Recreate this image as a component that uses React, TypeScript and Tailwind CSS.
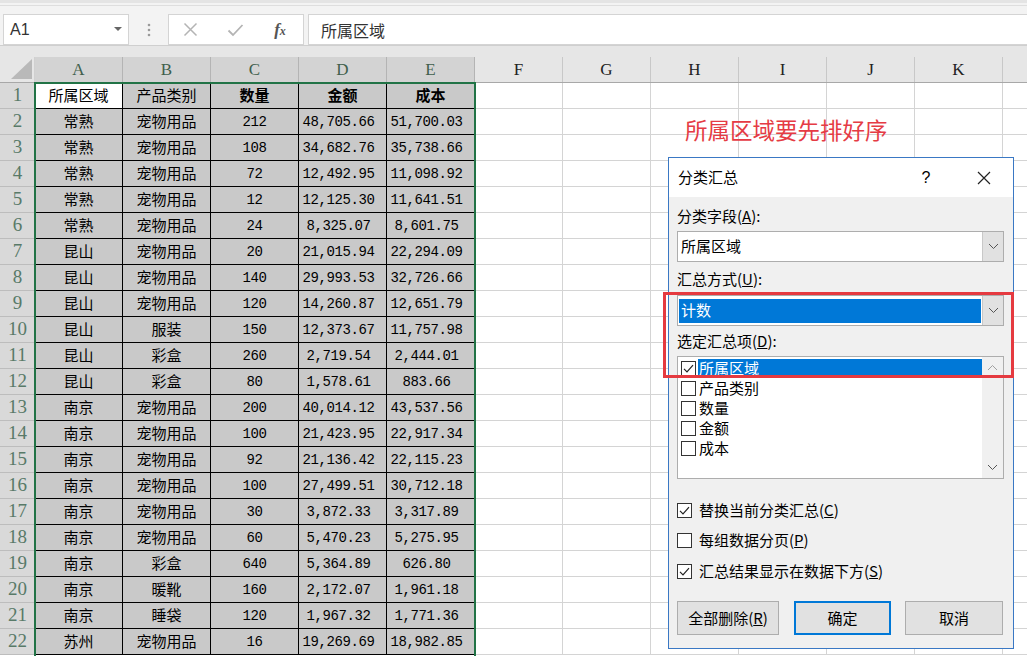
const COLS = ['A', 'B', 'C', 'D', 'E', 'F', 'G', 'H', 'I', 'J', 'K'];

const data: string[][] = [
  ['所属区域', '产品类别', '数量', '金额', '成本'],
  ['常熟', '宠物用品', '212', '48,705.66', '51,700.03'],
  ['常熟', '宠物用品', '108', '34,682.76', '35,738.66'],
  ['常熟', '宠物用品', '72', '12,492.95', '11,098.92'],
  ['常熟', '宠物用品', '12', '12,125.30', '11,641.51'],
  ['常熟', '宠物用品', '24', '8,325.07', '8,601.75'],
  ['昆山', '宠物用品', '20', '21,015.94', '22,294.09'],
  ['昆山', '宠物用品', '140', '29,993.53', '32,726.66'],
  ['昆山', '宠物用品', '120', '14,260.87', '12,651.79'],
  ['昆山', '服装', '150', '12,373.67', '11,757.98'],
  ['昆山', '彩盒', '260', '2,719.54', '2,444.01'],
  ['昆山', '彩盒', '80', '1,578.61', '883.66'],
  ['南京', '宠物用品', '200', '40,014.12', '43,537.56'],
  ['南京', '宠物用品', '100', '21,423.95', '22,917.34'],
  ['南京', '宠物用品', '92', '21,136.42', '22,115.23'],
  ['南京', '宠物用品', '100', '27,499.51', '30,712.18'],
  ['南京', '宠物用品', '30', '3,872.33', '3,317.89'],
  ['南京', '宠物用品', '60', '5,470.23', '5,275.95'],
  ['南京', '彩盒', '640', '5,364.89', '626.80'],
  ['南京', '暖靴', '160', '2,172.07', '1,961.18'],
  ['南京', '睡袋', '120', '1,967.32', '1,771.36'],
  ['苏州', '宠物用品', '16', '19,269.69', '18,982.85'],
];

const cjk = "font-['Noto_Sans_CJK_SC',sans-serif]";

function Check({ on }: { on: boolean }) {
  return (
    <div className="w-[15px] h-[15px] border border-[#333] bg-white shrink-0 flex items-center justify-center">
      {on && (
        <svg width="13" height="13" viewBox="0 0 13 13">
          <path d="M2 6.8 L5 9.8 L11 3.2" fill="none" stroke="#222" strokeWidth="1.2" />
        </svg>
      )}
    </div>
  );
}

function Chevron({ up }: { up?: boolean }) {
  return (
    <svg width="11" height="7" viewBox="0 0 11 7">
      <path d={up ? 'M1 6 L5.5 1.5 L10 6' : 'M1 1 L5.5 5.5 L10 1'} fill="none" stroke={up ? '#a0a0a0' : '#555'} strokeWidth="1" />
    </svg>
  );
}

function Combo({ value, selected }: { value: string; selected?: boolean }) {
  return (
    <div className="w-[327px] h-[31px] bg-white border border-[#adadad] flex">
      <div className="flex-1 flex items-center px-[1px]">
        {selected ? (
          <div className="w-full h-[24px] bg-[#0078d7] text-white flex items-center pl-[2px]">{value}</div>
        ) : (
          <div className="pl-[2px] text-black">{value}</div>
        )}
      </div>
      <div className="w-[21px] bg-[#e1e1e1] border-l border-[#c8c8c8] flex items-center justify-center">
        <Chevron />
      </div>
    </div>
  );
}

function Dialog() {
  const items = ['所属区域', '产品类别', '数量', '金额', '成本'];
  return (
    <div className={`absolute left-[668px] top-[157px] w-[346px] h-[492px] border border-[#3a78c4] bg-[#f0f0f0] ${cjk} text-[15px] text-black`}>
      <div className="h-[39px] bg-white flex items-center pl-[9px] pr-[6px]">
        <span>分类汇总</span>
        <div className="flex-1" />
        <div className="w-[46px] flex justify-center text-[16px] font-['Liberation_Sans']">?</div>
        <div className="w-[12px]" />
        <div className="w-[46px] flex justify-center">
          <svg width="14" height="14" viewBox="0 0 14 14">
            <path d="M1 1 L13 13 M13 1 L1 13" stroke="#222" strokeWidth="1.2" />
          </svg>
        </div>
      </div>
      <div className="px-[8px]">
        <div className="mt-[9px] h-[20px] leading-[20px]">分类字段(<span className="underline">A</span>):</div>
        <div className="mt-[5px]">
          <Combo value="所属区域" />
        </div>
        <div className="mt-[7px] h-[20px] leading-[20px]">汇总方式(<span className="underline">U</span>):</div>
        <div className="mt-[6px]">
          <Combo value="计数" selected />
        </div>
        <div className="mt-[5px] h-[20px] leading-[20px]">选定汇总项(<span className="underline">D</span>):</div>
        <div className="mt-[5px] w-[327px] h-[123px] bg-white border border-[#adadad] flex">
          <div className="flex-1 pt-[1px]">
            {items.map((it, i) => (
              <div key={it} className="h-[20px] flex items-center pl-[3px]">
                <Check on={i === 0} />
                <div className={`ml-[2px] flex-1 h-[19px] flex items-center pl-[1px] ${i === 0 ? 'bg-[#0078d7] text-white' : ''}`}>{it}</div>
              </div>
            ))}
          </div>
          <div className="w-[21px] bg-[#f0f0f0] flex flex-col items-center justify-between py-[7px]">
            <Chevron up />
            <Chevron up={false} />
          </div>
        </div>
        <div className="mt-[21px] h-[20px] flex items-center gap-[7px]">
          <Check on />
          <span>替换当前分类汇总(<span className="underline">C</span>)</span>
        </div>
        <div className="mt-[10px] h-[20px] flex items-center gap-[7px]">
          <Check on={false} />
          <span>每组数据分页(<span className="underline">P</span>)</span>
        </div>
        <div className="mt-[11px] h-[20px] flex items-center gap-[7px]">
          <Check on />
          <span>汇总结果显示在数据下方(<span className="underline">S</span>)</span>
        </div>
        <div className="mt-[20px] flex">
          <div className="w-[102px] h-[34px] bg-[#e1e1e1] border border-[#adadad] flex items-center justify-center">
            全部删除(<span className="underline">R</span>)
          </div>
          <div className="ml-[15px] w-[97px] h-[34px] bg-[#e1e1e1] border-2 border-[#0078d7] flex items-center justify-center">确定</div>
          <div className="ml-[14px] w-[98px] h-[34px] bg-[#e1e1e1] border border-[#adadad] flex items-center justify-center">取消</div>
        </div>
      </div>
    </div>
  );
}

function FormulaBar() {
  return (
    <div className="h-[45px] bg-[#f3f3f3] border-t-[3px] border-[#e4e4e4] flex items-end relative">
      <div className="absolute left-0 right-0 top-[2px] h-px bg-[#dedede]" />
      <div className="ml-[3px] w-[126px] h-[31px] bg-white border border-[#d4d4d4] flex items-center pl-[6px] pr-[6px]">
        <span className="text-[16px] text-[#333] font-['Liberation_Sans']">A1</span>
        <div className="flex-1" />
        <svg width="8" height="5" viewBox="0 0 8 5">
          <path d="M0 0 L8 0 L4 4 Z" fill="#666" />
        </svg>
      </div>
      <div className="w-[39px] h-[31px] flex items-center justify-center">
        <svg width="4" height="14" viewBox="0 0 4 14">
          <circle cx="2" cy="2" r="1.3" fill="#9a9a9a" />
          <circle cx="2" cy="7" r="1.3" fill="#9a9a9a" />
          <circle cx="2" cy="12" r="1.3" fill="#9a9a9a" />
        </svg>
      </div>
      <div className="w-[136px] h-[31px] bg-white border border-[#d4d4d4] flex items-center">
        <div className="w-[42px] flex justify-center">
          <svg width="15" height="15" viewBox="0 0 15 15">
            <path d="M1.5 1.5 L13.5 13.5 M13.5 1.5 L1.5 13.5" stroke="#b4b4b4" strokeWidth="1.5" />
          </svg>
        </div>
        <div className="w-[48px] flex justify-center">
          <svg width="17" height="14" viewBox="0 0 17 14">
            <path d="M1.5 7.5 L6 12 L15.5 2" fill="none" stroke="#b4b4b4" strokeWidth="1.8" />
          </svg>
        </div>
        <div className="w-[42px] flex justify-center">
          <span className="font-['Liberation_Serif'] italic font-bold text-[17px] text-[#555]">
            f<span className="text-[12px]">x</span>
          </span>
        </div>
      </div>
      <div className="ml-[4px] flex-1 h-[31px] bg-white border border-[#d4d4d4] border-r-0 flex items-center pl-[12px]">
        <span className={`${cjk} text-[16px] text-[#333]`}>所属区域</span>
      </div>
    </div>
  );
}

function DataCell({ v, r, i }: { v: string; r: number; i: number }) {
  const mono = i >= 2 && r > 0;
  const bg = r === 0 && i === 0 ? 'bg-white' : 'bg-[#c9c9c9]';
  const font = mono
    ? `font-['Liberation_Mono'] text-[14px] tracking-[-0.4px] pt-[2px] ${i >= 3 ? 'pr-[8px]' : ''}`
    : `${cjk} text-[15px] ${r === 0 && i >= 2 ? 'font-bold' : ''}`;
  return (
    <div className={`w-[88px] shrink-0 border-r border-b border-black flex items-center justify-center text-black ${bg} ${font}`}>
      {v}
    </div>
  );
}

export default function App() {
  return (
    <div className="w-[1027px] h-[656px] overflow-hidden relative bg-white">
      <FormulaBar />
      <div className="h-[12px] bg-[#e6e6e6] border-t border-[#cfcfcf]" />
      <div className="h-[26px] flex bg-[#e6e6e6] border-b border-[#a8a8a8]">
        <div className="w-[35px] shrink-0 flex items-end justify-end pr-[2px] pb-[3px] border-r border-[#d0d0d0]">
          <svg width="21" height="20" viewBox="0 0 21 20">
            <path d="M21 0 L21 20 L0 20 Z" fill="#b9b9b9" />
          </svg>
        </div>
        {COLS.map((c, i) => (
          <div
            key={c}
            className={`w-[88px] shrink-0 flex items-center justify-center border-r font-['Liberation_Serif'] text-[17px] ${
              i < 5 ? 'bg-[#d3d3d3] border-[#b4b4b4] text-[#3f5f4c]' : 'border-[#c8c8c8] text-[#222]'
            }`}
          >
            {c}
          </div>
        ))}
        <div className="flex-1" />
      </div>
      {data.map((row, r) => (
        <div key={r} className="h-[26px] flex">
          <div className="w-[35px] shrink-0 bg-[#d9d9d9] border-b border-[#bdbdbd] flex items-center justify-center font-['Liberation_Serif'] text-[19px] text-[#587a68]">
            {r + 1}
          </div>
          {COLS.map((c, i) =>
            i < 5 ? (
              <DataCell key={c} v={row[i]} r={r} i={i} />
            ) : (
              <div key={c} className="w-[88px] shrink-0 border-r border-b border-[#d4d4d4]" />
            )
          )}
          <div className="flex-1 border-b border-[#d4d4d4]" />
        </div>
      ))}

      {/* selection outline A1:E22 */}
      <div className="absolute left-[34px] top-[82px] w-[442px] h-[580px] border-2 border-[#217346] pointer-events-none" />

      <div className={`absolute left-[685px] top-[113px] ${cjk} text-[22.5px] leading-[32px] text-[#e53b44]`}>所属区域要先排好序</div>

      <Dialog />

      {/* annotation box */}
      <div className="absolute left-[663px] top-[292px] w-[351px] h-[86px] border-[3px] border-[#e53a40] pointer-events-none" />
    </div>
  );
}
